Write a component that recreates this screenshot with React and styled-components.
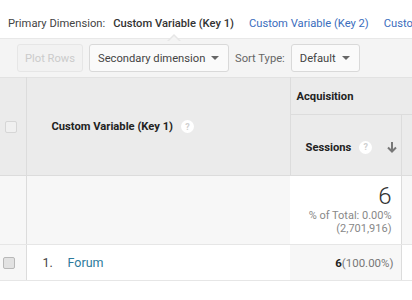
import React from "react";
import styled, { createGlobalStyle } from "styled-components";

const Global = createGlobalStyle`
  html, body { margin: 0; padding: 0; background: #fff; }
  body { font-family: Roboto, "Liberation Sans", Arial, sans-serif; color: #333; overflow: hidden; }
  * { box-sizing: border-box; }
`;

const Page = styled.div`
  width: 412px;
  height: 300px;
  overflow: hidden;
  background: #fff;
`;

const DimBar = styled.div`
  display: flex;
  align-items: center;
  white-space: nowrap;
  height: 38px;
  padding: 8px 0 0 8px;
  font-size: 11.2px;
`;

const DimLabel = styled.span`
  color: #444;
  margin-right: 8px;
`;

const DimTab = styled.span`
  position: relative;
  margin-right: 15px;
  color: ${(p) => (p.$active ? "#333" : "#3b6dbd")};
  font-weight: ${(p) => (p.$active ? 500 : 400)};
  ${(p) =>
    p.$active &&
    `
    &::after {
      content: "";
      position: absolute;
      left: 50%;
      bottom: -12px;
      margin-left: -6px;
      border: 6px solid transparent;
      border-bottom-color: #f4f4f4;
      border-top: 0;
    }
    &::before {
      content: "";
      position: absolute;
      left: 50%;
      bottom: -11px;
      margin-left: -7px;
      border: 7px solid transparent;
      border-bottom-color: #e6e6e6;
      border-top: 0;
    }
  `}
`;

const Toolbar = styled.div`
  display: flex;
  align-items: center;
  height: 39px;
  padding: 0 0 0 17px;
  background: #f4f4f4;
  border-top: 1px solid #e8e8e8;
  white-space: nowrap;
`;

const Button = styled.div`
  display: flex;
  align-items: center;
  justify-content: ${(p) => (p.$caret ? "space-between" : "center")};
  height: 28px;
  padding: 0 ${(p) => (p.$caret ? "9px" : "0")} 0 ${(p) => (p.$caret ? "8px" : "0")};
  margin-right: 6px;
  width: ${(p) => p.$w}px;
  border: 1px solid ${(p) => (p.$disabled ? "#e6e6e6" : "#d9d9d9")};
  border-radius: 3px;
  background: ${(p) => (p.$disabled ? "#f2f2f2" : "#fafafa")};
  color: ${(p) => (p.$disabled ? "#cbcbcb" : "#444")};
  font-size: 11.2px;
`;

const Caret = styled.span`
  width: 0;
  height: 0;
  border-left: 4px solid transparent;
  border-right: 4px solid transparent;
  border-top: 4px solid #666;
`;

const SortLabel = styled.span`
  font-size: 11.2px;
  color: #666;
  margin-right: 6px;
`;

const Table = styled.table`
  border-collapse: collapse;
  table-layout: fixed;
  width: 420px;
  font-size: 11.5px;
`;

const Col = styled.col`
  width: ${(p) => p.$w}px;
`;

const HeadCell = styled.th`
  background: #ebebeb;
  border-top: 1px solid #e2e2e2;
  border-right: 1px solid #dcdcdc;
  border-bottom: 1px solid #dcdcdc;
  height: ${(p) => p.$h}px;
  padding: ${(p) => p.$pad || "0"};
  text-align: left;
  vertical-align: middle;
  font-weight: 700;
  color: #222;
  font-size: 11.2px;
  white-space: nowrap;
`;

const HeadInner = styled.div`
  display: flex;
  align-items: center;
  gap: ${(p) => p.$gap || 8}px;
`;

const Help = styled.span`
  display: inline-flex;
  align-items: center;
  justify-content: center;
  width: 13px;
  height: 13px;
  border-radius: 50%;
  background: #fff;
  color: #d0d0d0;
  font-size: 9px;
  font-weight: 700;
  margin-right: ${(p) => p.$mr || 0}px;
`;

const CheckBox = styled.span`
  display: block;
  width: 12px;
  height: 12px;
  border-radius: 2px;
  border: 1px solid ${(p) => (p.$filled ? "#b8b8b8" : "#d6d6d6")};
  background: ${(p) => (p.$filled ? "#e2e2e2" : "#f0f0f0")};
  margin-left: ${(p) => p.$ml}px;
`;

const Cell = styled.td`
  height: ${(p) => p.$h}px;
  background: ${(p) => p.$bg || "#fff"};
  border-right: ${(p) => (p.$noRight ? "0" : "1px solid #dcdcdc")};
  border-bottom: 1px solid #e6e6e6;
  padding: ${(p) => p.$pad || "0"};
  text-align: ${(p) => p.$align || "left"};
  vertical-align: middle;
  white-space: nowrap;
`;

const BigNum = styled.div`
  font-size: 24px;
  font-weight: 300;
  color: #333;
  line-height: 26px;
`;

const SubText = styled.div`
  font-size: 11px;
  color: #888;
  line-height: 13px;
`;

const RowNum = styled.span`
  display: inline-block;
  width: 25px;
  color: #444;
  font-size: 12.5px;
`;

const Link = styled.span`
  color: #2c7a9c;
  font-size: 12.5px;
`;

const Strong = styled.b`
  color: #222;
`;

const Muted = styled.span`
  color: #777;
`;

export default function App() {
  return (
    <Page>
      <Global />
      <DimBar>
        <DimLabel>Primary Dimension:</DimLabel>
        <DimTab $active>Custom Variable (Key 1)</DimTab>
        <DimTab>Custom Variable (Key 2)</DimTab>
        <DimTab>Custom Variable (Key 3)</DimTab>
      </DimBar>
      <Toolbar>
        <Button $disabled $w={66}>Plot Rows</Button>
        <Button $caret $w={140}>
          Secondary dimension <Caret />
        </Button>
        <SortLabel>Sort Type:</SortLabel>
        <Button $caret $w={69}>
          Default <Caret />
        </Button>
      </Toolbar>
      <Table>
        <colgroup>
          <Col $w={26} />
          <Col $w={264} />
          <Col $w={111} />
          <Col $w={19} />
        </colgroup>
        <thead>
          <tr>
            <HeadCell rowSpan={2} $h={98}>
              <CheckBox $ml={5} />
            </HeadCell>
            <HeadCell rowSpan={2} $pad="0 0 0 25px">
              <HeadInner>
                Custom Variable (Key 1) <Help>?</Help>
              </HeadInner>
            </HeadCell>
            <HeadCell colSpan={2} $h={37} $pad="0 0 0 6px">
              Acquisition
            </HeadCell>
          </tr>
          <tr>
            <HeadCell $h={61} $pad="4px 0 0 15px">
              <HeadInner $gap={8}>
                Sessions <Help $mr={6}>?</Help>
                <svg width="12" height="12" viewBox="0 0 12 12">
                  <path d="M6 1v9M2 6.5l4 4 4-4" stroke="#777" strokeWidth="2" fill="none" />
                </svg>
              </HeadInner>
            </HeadCell>
            <HeadCell $h={61} />
          </tr>
        </thead>
        <tbody>
          <tr>
            <Cell $h={69} $bg="#f7f7f7" />
            <Cell $bg="#f7f7f7" $noRight />
            <Cell $align="right" $pad="0 9px 2px 0">
              <BigNum>6</BigNum>
              <SubText>% of Total: 0.00%</SubText>
              <SubText>(2,701,916)</SubText>
            </Cell>
            <Cell $bg="#f7f7f7" />
          </tr>
          <tr>
            <Cell $h={36} $bg="#f7f7f7">
              <CheckBox $filled $ml={3} />
            </Cell>
            <Cell $pad="0 0 0 16px" $noRight>
              <RowNum>1.</RowNum>
              <Link>Forum</Link>
            </Cell>
            <Cell $bg="#f7f7f7" $align="right" $pad="0 7px 0 0">
              <Strong>6</Strong>
              <Muted>(100.00%)</Muted>
            </Cell>
            <Cell />
          </tr>
        </tbody>
      </Table>
    </Page>
  );
}
